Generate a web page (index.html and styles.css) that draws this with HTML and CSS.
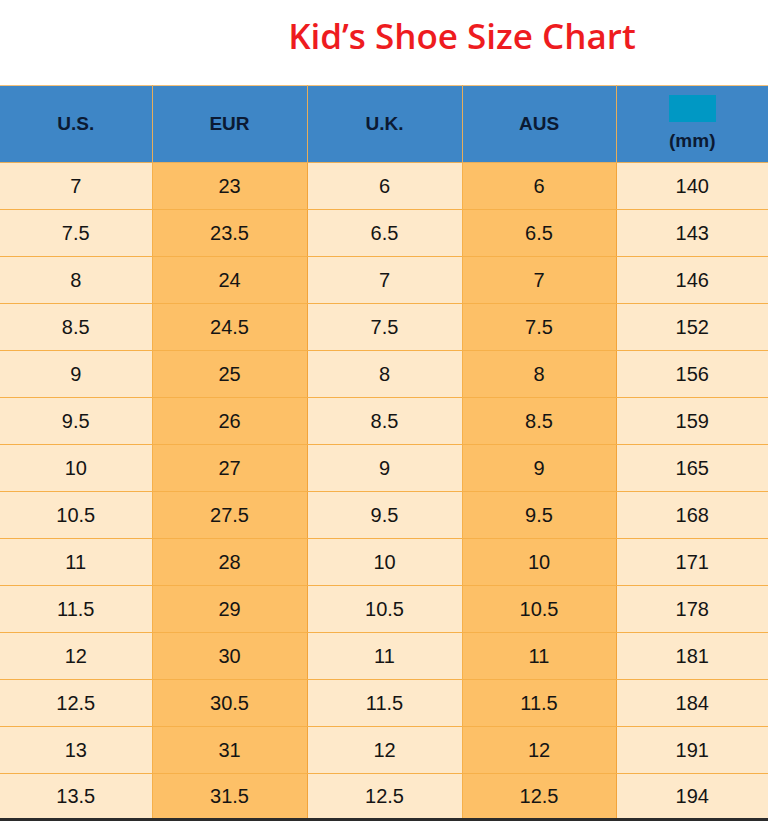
FILE: index.html
```html
<!DOCTYPE html>
<html>
<head>
<meta charset="utf-8">
<link rel="stylesheet" href="styles.css">
</head>
<body>
<div class="page">
  <h1 class="title">Kid’s Shoe Size Chart</h1>
  <table class="chart">
    <colgroup>
      <col class="c1"><col class="c2"><col class="c3"><col class="c4"><col class="c5">
    </colgroup>
    <thead>
      <tr>
        <th>U.S.</th>
        <th>EUR</th>
        <th>U.K.</th>
        <th>AUS</th>
        <th><div class="mm-stack"><span class="swatch"></span><span class="mm">(mm)</span></div></th>
      </tr>
    </thead>
    <tbody>
      <tr><td>7</td><td class="hi">23</td><td>6</td><td class="hi">6</td><td>140</td></tr>
      <tr><td>7.5</td><td class="hi">23.5</td><td>6.5</td><td class="hi">6.5</td><td>143</td></tr>
      <tr><td>8</td><td class="hi">24</td><td>7</td><td class="hi">7</td><td>146</td></tr>
      <tr><td>8.5</td><td class="hi">24.5</td><td>7.5</td><td class="hi">7.5</td><td>152</td></tr>
      <tr><td>9</td><td class="hi">25</td><td>8</td><td class="hi">8</td><td>156</td></tr>
      <tr><td>9.5</td><td class="hi">26</td><td>8.5</td><td class="hi">8.5</td><td>159</td></tr>
      <tr><td>10</td><td class="hi">27</td><td>9</td><td class="hi">9</td><td>165</td></tr>
      <tr><td>10.5</td><td class="hi">27.5</td><td>9.5</td><td class="hi">9.5</td><td>168</td></tr>
      <tr><td>11</td><td class="hi">28</td><td>10</td><td class="hi">10</td><td>171</td></tr>
      <tr><td>11.5</td><td class="hi">29</td><td>10.5</td><td class="hi">10.5</td><td>178</td></tr>
      <tr><td>12</td><td class="hi">30</td><td>11</td><td class="hi">11</td><td>181</td></tr>
      <tr><td>12.5</td><td class="hi">30.5</td><td>11.5</td><td class="hi">11.5</td><td>184</td></tr>
      <tr><td>13</td><td class="hi">31</td><td>12</td><td class="hi">12</td><td>191</td></tr>
      <tr class="last"><td>13.5</td><td class="hi">31.5</td><td>12.5</td><td class="hi">12.5</td><td>194</td></tr>
    </tbody>
  </table>
</div>
</body>
</html>
```

FILE: styles.css
```css
html, body {
  margin: 0;
  padding: 0;
  background: #ffffff;
}
.page {
  width: 768px;
  height: 821px;
  overflow: hidden;
}
.title {
  margin: 0;
  height: 85px;
  box-sizing: border-box;
  padding: 14px 0 0 156px;
  text-align: center;
  font-family: "Open Sans", "Liberation Sans", sans-serif;
  font-weight: 600;
  font-size: 35px;
  line-height: 44px;
  color: #ee1c1f;
}
.chart {
  width: 768px;
  border-collapse: collapse;
  table-layout: fixed;
  font-family: "Liberation Sans", Arial, sans-serif;
}
.c1 { width: 152px; }
.c2 { width: 155px; }
.c3 { width: 155px; }
.c4 { width: 154px; }
.c5 { width: 152px; }
.chart th {
  height: 76px;
  padding: 0;
  background: #3e86c6;
  color: #0b1a33;
  font-size: 19px;
  font-weight: bold;
  border: 1px solid #e7ad5a;
  border-top: 1px solid #f2c07a;
  text-align: center;
  vertical-align: middle;
}
.chart th:first-child { border-left: none; }
.chart th:last-child { border-right: none; }
.mm-stack {
  display: flex;
  flex-direction: column;
  align-items: center;
  gap: 8px;
  padding-bottom: 2px;
}
.mm {
  line-height: 22px;
}
.swatch {
  display: block;
  width: 47px;
  height: 27px;
  background: #0098c4;
}
.chart td {
  height: 46px;
  padding: 0;
  background: #fee9ca;
  color: #141414;
  font-size: 20px;
  text-align: center;
  vertical-align: middle;
  border: 1px solid #f6b04a;
}
.chart td:first-child { border-left: none; }
.chart td:last-child { border-right: none; }
.chart td.hi {
  background: #fdc067;
  border-left-color: #f3a43a;
  border-right-color: #f3a43a;
}
.chart tr.last td {
  height: 44px;
  border-bottom: 3px solid #2b2b2b;
}
```
